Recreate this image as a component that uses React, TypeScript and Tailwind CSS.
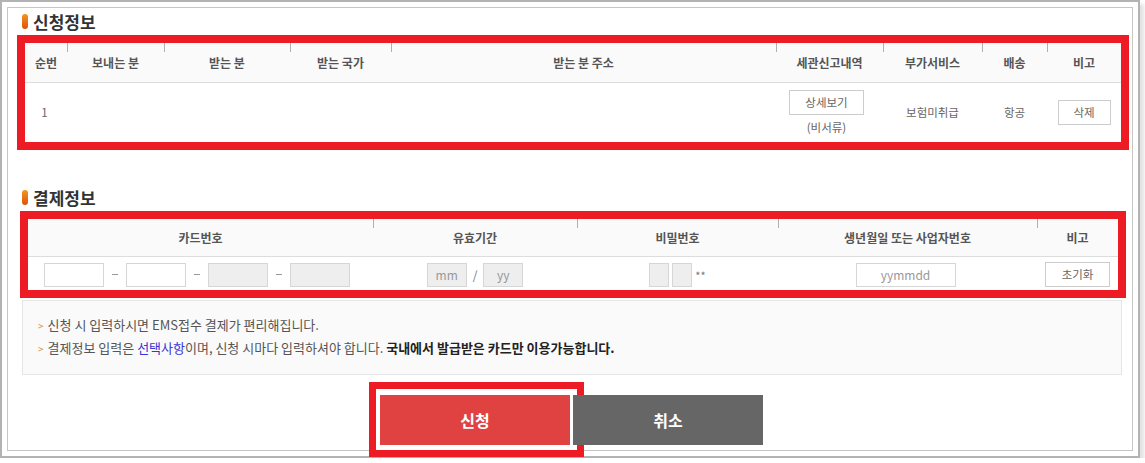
import React from "react";

const SectionTitle = ({ title, className }: { title: string; className: string }) => {
  return (
    <div className={`flex items-center pl-[14px] ${className}`}>
      <span className="w-[6px] h-[15px] rounded-full bg-gradient-to-b from-[#f6931f] to-[#d9530a]" />
      <h3 className="ml-[5px] text-[17px] font-bold text-[#333] leading-none">{title}</h3>
    </div>
  );
};

const HeadCell = ({ label, sep = true }: { label: string; sep?: boolean }) => {
  return (
    <div className="relative flex items-center justify-center">
      {sep && <span className="absolute left-0 top-0 w-px h-[9px] bg-[#b0b0b0]" />}
      <span className="text-[12px] font-bold text-[#555]">{label}</span>
    </div>
  );
};

const Box = ({ gray = false, w, text }: { gray?: boolean; w: string; text?: string }) => {
  return (
    <div
      className={`${w} h-[24px] border border-[#d6d6d6] flex items-center justify-center text-[12px] text-[#999] ${
        gray ? "bg-[#eeeeee]" : "bg-white"
      }`}
    >
      {text}
    </div>
  );
};

const Dash = () => <span className="w-[6px] h-px bg-[#999]" />;

export default function App() {
  return (
    <div className="font-['Noto_Sans_CJK_KR','Noto_Sans',sans-serif]">
      <div className="w-[1140px] h-[458px] border-2 border-[#b3b3b3] bg-white p-[5px] shadow-[4px_4px_4px_rgba(0,0,0,0.12)]">
        <div className="h-full border border-[#c6c6c6] flex flex-col">
          <SectionTitle title="신청정보" className="h-[27px]" />

          {/* 신청정보 table */}
          <div className="ml-[9px] w-[1112px] border-8 border-[#ed1c24]">
            <div className="grid grid-cols-[42px_97px_126px_101px_385px_107px_99px_65px_74px] h-[40px] bg-[#fafafa] border-b border-[#dddddd]">
              <HeadCell label="순번" sep={false} />
              <HeadCell label="보내는 분" />
              <HeadCell label="받는 분" />
              <HeadCell label="받는 국가" />
              <HeadCell label="받는 분 주소" />
              <HeadCell label="세관신고내역" />
              <HeadCell label="부가서비스" />
              <HeadCell label="배송" />
              <HeadCell label="비고" />
            </div>
            <div className="grid grid-cols-[42px_97px_126px_101px_385px_107px_99px_65px_74px] h-[59px] text-[11.5px] text-[#666]">
              <div className="flex items-center justify-center pr-[3px]">1</div>
              <div />
              <div />
              <div />
              <div />
              <div className="flex flex-col items-center justify-center pr-[6px]">
                <button className="w-[75px] h-[25px] border border-[#cccccc] bg-white text-[11.5px] text-[#666]">
                  상세보기
                </button>
                <span className="mt-[4px] leading-[16px]">(비서류)</span>
              </div>
              <div className="flex items-center justify-center">보험미취급</div>
              <div className="flex items-center justify-center">항공</div>
              <div className="flex items-center justify-center">
                <button className="w-[53px] h-[25px] border border-[#cccccc] bg-white text-[11.5px] text-[#666]">
                  삭제
                </button>
              </div>
            </div>
          </div>

          <SectionTitle title="결제정보" className="mt-[34px] h-[27px]" />

          {/* 결제정보 table */}
          <div className="ml-[12px] w-[1106px] border-8 border-[#ed1c24]">
            <div className="grid grid-cols-[345px_204px_201px_259px_81px] h-[38px] bg-[#fafafa] border-b border-[#dddddd]">
              <HeadCell label="카드번호" sep={false} />
              <HeadCell label="유효기간" />
              <HeadCell label="비밀번호" />
              <HeadCell label="생년월일 또는 사업자번호" />
              <HeadCell label="비고" />
            </div>
            <div className="grid grid-cols-[345px_204px_201px_259px_81px] h-[33px] pt-[2px]">
              <div className="flex items-center gap-[8px] pl-[16px]">
                <Box w="w-[60px]" />
                <Dash />
                <Box w="w-[60px]" />
                <Dash />
                <Box w="w-[60px]" gray />
                <Dash />
                <Box w="w-[60px]" gray />
              </div>
              <div className="flex items-center justify-center gap-[6px]">
                <Box w="w-[40px]" gray text="mm" />
                <span className="text-[12px] text-[#777]">/</span>
                <Box w="w-[40px]" gray text="yy" />
              </div>
              <div className="flex items-center justify-center gap-[3px]">
                <Box w="w-[20px]" gray />
                <Box w="w-[20px]" gray />
                <span className="text-[11px] text-[#777] leading-none pt-[2px]">**</span>
              </div>
              <div className="flex items-center justify-center pr-[4px]">
                <Box w="w-[100px]" text="yymmdd" />
              </div>
              <div className="flex items-center justify-center">
                <button className="w-[65px] h-[25px] border border-[#cccccc] bg-white text-[11.5px] text-[#666]">
                  초기화
                </button>
              </div>
            </div>
          </div>

          {/* 안내 */}
          <div className="mt-[2px] ml-[14px] w-[1100px] h-[75px] border border-[#e6e6e6] bg-[#fafafa] pt-[13px] pl-[15px] text-[13px] text-[#555] leading-[22px]">
            <p>
              <span className="text-[#e08a3c] mr-[4px] text-[10px]">&gt;</span>신청 시 입력하시면 EMS접수 결제가 편리해집니다.
            </p>
            <p>
              <span className="text-[#e08a3c] mr-[4px] text-[10px]">&gt;</span>결제정보 입력은{" "}
              <span className="text-[#3535d9]">선택사항</span>이며, 신청 시마다 입력하셔야 합니다.{" "}
              <b className="text-[#222]">국내에서 발급받은 카드만 이용가능합니다.</b>
            </p>
          </div>

          {/* 버튼 */}
          <div className="mt-[20px] flex justify-center gap-[3px] pl-[3px]">
            <div className="relative">
              <span className="absolute -left-[11px] -top-[13px] w-[215px] h-[75px] border-[7px] border-[#ed1c24]" />
              <button className="relative w-[190px] h-[50px] bg-[#e04242] text-white text-[16px] font-bold">
                신청
              </button>
            </div>
            <button className="relative w-[190px] h-[50px] bg-[#666666] text-white text-[16px] font-bold">
              취소
            </button>
          </div>
        </div>
      </div>
    </div>
  );
}
